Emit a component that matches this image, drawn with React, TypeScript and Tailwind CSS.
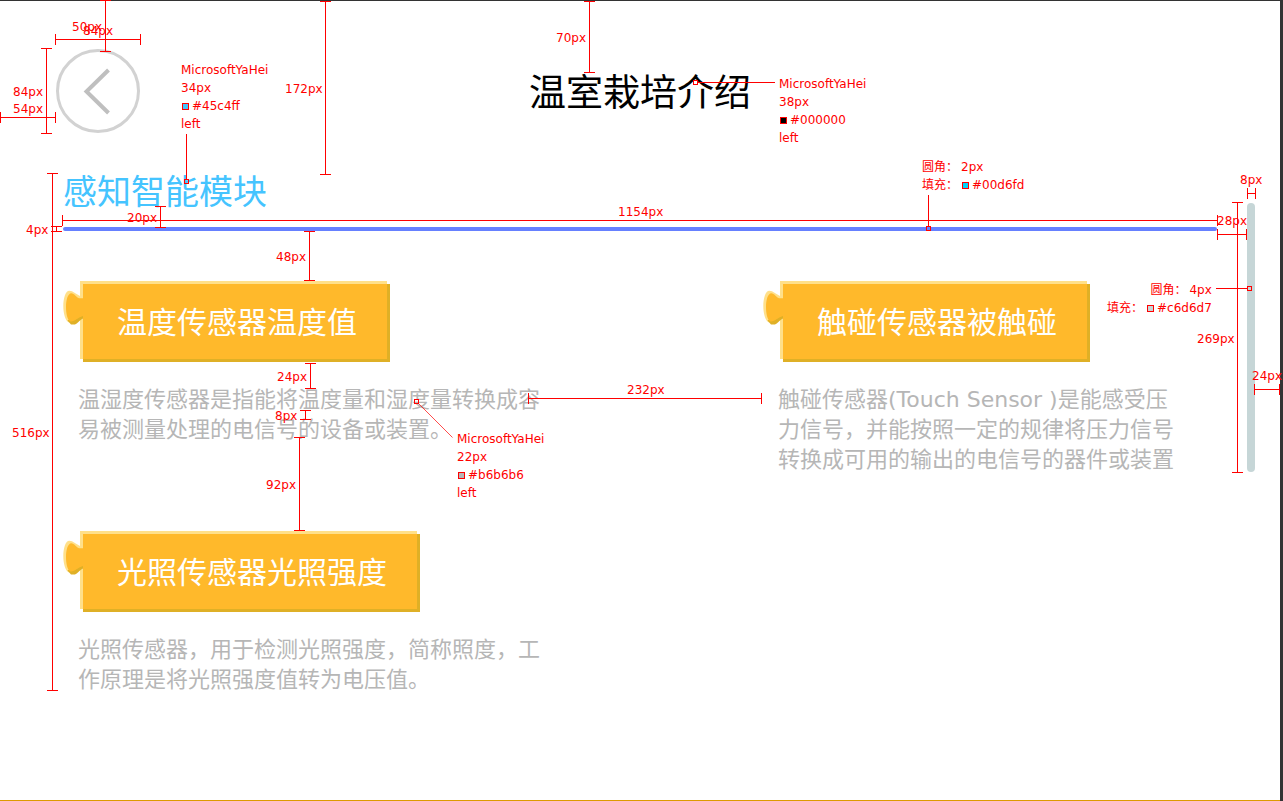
import React from "react";

type Mark = { x1: number; y1: number; x2: number; y2: number };

const dimensions: Mark[] = [
  { x1: 105, y1: 0, x2: 105, y2: 51 },
  { x1: 55, y1: 39, x2: 140, y2: 39 },
  { x1: 46, y1: 48, x2: 46, y2: 133 },
  { x1: 0, y1: 117, x2: 55, y2: 117 },
  { x1: 325, y1: 1, x2: 325, y2: 174 },
  { x1: 589, y1: 1, x2: 589, y2: 72 },
  { x1: 52, y1: 173, x2: 52, y2: 690 },
  { x1: 160, y1: 206, x2: 160, y2: 227 },
  { x1: 62, y1: 220, x2: 1217, y2: 220 },
  { x1: 56, y1: 226, x2: 56, y2: 231 },
  { x1: 309, y1: 231, x2: 309, y2: 280 },
  { x1: 310, y1: 363, x2: 310, y2: 388 },
  { x1: 305, y1: 410, x2: 305, y2: 419 },
  { x1: 299, y1: 437, x2: 299, y2: 530 },
  { x1: 528, y1: 398, x2: 761, y2: 398 },
  { x1: 1217, y1: 234, x2: 1246, y2: 234 },
  { x1: 1247, y1: 193, x2: 1255, y2: 193 },
  { x1: 1237, y1: 202, x2: 1237, y2: 472 },
  { x1: 1254, y1: 389, x2: 1279, y2: 389 },
];

const leaders: Mark[] = [
  { x1: 186, y1: 134, x2: 186, y2: 179 },
  { x1: 698, y1: 82, x2: 774, y2: 82 },
  { x1: 928, y1: 195, x2: 928, y2: 226 },
  { x1: 1216, y1: 288, x2: 1247, y2: 288 },
];

const anchors = [
  { x: 186, y: 181 },
  { x: 695, y: 82 },
  { x: 928, y: 228 },
  { x: 1249, y: 288 },
  { x: 416, y: 401 },
];

function markPath({ x1, y1, x2, y2 }: Mark) {
  return x1 === x2
    ? `M${x1 + 0.5} ${y1}V${y2 + 1}M${x1 - 5} ${y1 + 0.5}h11M${x1 - 5} ${y2 + 0.5}h11`
    : `M${x1} ${y1 + 0.5}H${x2 + 1}M${x1 + 0.5} ${y1 - 5}v11M${x2 + 0.5} ${y1 - 5}v11`;
}

function MarkLines() {
  return (
    <svg
      className="absolute left-0 top-0"
      width="1283"
      height="801"
      fill="none"
      stroke="#ff0000"
      aria-hidden="true"
    >
      {dimensions.map((d, i) => (
        <path key={i} d={markPath(d)} />
      ))}
      {leaders.map((l, i) => (
        <path
          key={i}
          d={
            l.x1 === l.x2
              ? `M${l.x1 + 0.5} ${l.y1}V${l.y2 + 1}`
              : `M${l.x1} ${l.y1 + 0.5}H${l.x2 + 1}`
          }
        />
      ))}
      <path d="M418.5 403.5L452.5 437.5" strokeWidth="0.7" />
      {anchors.map((a, i) => (
        <rect key={i} x={a.x - 1.5} y={a.y - 1.5} width="4" height="4" />
      ))}
    </svg>
  );
}

function Label({ at, children }: { at: string; children: React.ReactNode }) {
  return <div className={`absolute whitespace-nowrap ${at}`}>{children}</div>;
}

function Swatch({ color, value }: { color: string; value: string }) {
  return (
    <span className="inline-flex items-center gap-[3px]">
      <span className={`size-[7px] border border-[#ff0000] ${color}`} />
      {value}
    </span>
  );
}

function FontNote({
  at,
  size,
  color,
  value,
}: {
  at: string;
  size: string;
  color: string;
  value: string;
}) {
  return (
    <Label at={at}>
      <p>MicrosoftYaHei</p>
      <p>{size}</p>
      <p className="flex pl-px">
        <Swatch color={color} value={value} />
      </p>
      <p>left</p>
    </Label>
  );
}

function FillNote({
  at,
  align,
  radius,
  color,
  value,
}: {
  at: string;
  align: string;
  radius: string;
  color: string;
  value: string;
}) {
  return (
    <Label at={at}>
      <p className={`flex gap-[3px] ${align}`}>
        <span>圆角：</span>
        <span>{radius}</span>
      </p>
      <p className="flex gap-1">
        <span>填充：</span>
        <Swatch color={color} value={value} />
      </p>
    </Label>
  );
}

function Annotations() {
  return (
    <div className="pointer-events-none absolute -right-[3px] -top-px bottom-0 left-0 overflow-hidden font-['DejaVu_Sans','Noto_Sans_CJK_SC',sans-serif] text-[12px] leading-[18px] text-[#ff0000]">
      <MarkLines />
      <Label at="left-[72px] top-[18px]">50px</Label>
      <Label at="left-[83px] top-[22px]">84px</Label>
      <Label at="left-[13px] top-[83px]">84px</Label>
      <Label at="left-[13px] top-[100px]">54px</Label>
      <Label at="left-[285px] top-[80px]">172px</Label>
      <Label at="left-[556px] top-[29px]">70px</Label>
      <Label at="left-[127px] top-[209px]">20px</Label>
      <Label at="left-[618px] top-[203px]">1154px</Label>
      <Label at="left-[26px] top-[221px]">4px</Label>
      <Label at="left-[1240px] top-[171px]">8px</Label>
      <Label at="left-[1217px] top-[212px]">28px</Label>
      <Label at="left-[276px] top-[248px]">48px</Label>
      <Label at="left-[277px] top-[368px]">24px</Label>
      <Label at="left-[275px] top-[407px]">8px</Label>
      <Label at="left-[266px] top-[476px]">92px</Label>
      <Label at="left-[12px] top-[424px]">516px</Label>
      <Label at="left-[627px] top-[381px]">232px</Label>
      <Label at="left-[1197px] top-[330px]">269px</Label>
      <Label at="left-[1252px] top-[367px]">24px</Label>
      <FontNote at="left-[181px] top-[61px]" size="34px" color="bg-[#45c4ff]" value="#45c4ff" />
      <FontNote at="left-[779px] top-[75px]" size="38px" color="bg-black" value="#000000" />
      <FontNote at="left-[457px] top-[430px]" size="22px" color="bg-[#b6b6b6]" value="#b6b6b6" />
      <FillNote
        at="left-[922px] top-[158px]"
        align="justify-start"
        radius="2px"
        color="bg-[#00d6fd]"
        value="#00d6fd"
      />
      <FillNote
        at="left-[1107px] top-[281px]"
        align="justify-end"
        radius="4px"
        color="bg-[#c6d6d7]"
        value="#c6d6d7"
      />
    </div>
  );
}

function PuzzleBlock({ title }: { title: string }) {
  return (
    <div className="relative ml-[17px] w-fit border-l-[3px] border-t-[3px] border-[#ffe08a] bg-[#ffb92b] pl-[34px] pr-[30px] shadow-[3px_3px_0_#dfb026]">
      <svg
        className="absolute -left-5 top-[6px]"
        width="21"
        height="36"
        viewBox="0 0 21 36"
        aria-hidden="true"
      >
        <path
          d="M20 6L17 6L11.500 2.800C9.800 1.500 8.300 .7 6.300 .7C2.500 .7 .3 8.500 .3 16C.3 24 2.500 31 6 32.500L20 27Z"
          fill="#ffe08a"
        />
        <path
          d="M4.500 30.500L8 34.500H12C14.500 33.500 16 30.500 20 28.500V22Z"
          fill="#dfb026"
        />
        <path
          d="M21 8.300H16C13.500 7.500 11 3.300 8.300 3.300C5 3.500 3 9.500 3 17C3 24 4.800 31.500 8 31.500C12 31.500 14.500 27.500 20 26H21Z"
          fill="#ffb92b"
        />
      </svg>
      <h3 className="whitespace-nowrap pb-[3px] text-[30px] leading-[72px] text-white">{title}</h3>
    </div>
  );
}

function SensorCard({ title, lines }: { title: string; lines: string[] }) {
  return (
    <article className="min-w-0">
      <PuzzleBlock title={title} />
      <p className="mt-[26px] whitespace-nowrap pl-[15px] font-['DejaVu_Sans','Noto_Sans_CJK_SC',sans-serif] text-[22px] leading-[30px] text-[#b6b6b6]">
        {lines.map((line) => (
          <span key={line} className="block">
            {line}
          </span>
        ))}
      </p>
    </article>
  );
}

const sensors = [
  {
    title: "温度传感器温度值",
    lines: ["温湿度传感器是指能将温度量和湿度量转换成容", "易被测量处理的电信号的设备或装置。"],
  },
  {
    title: "触碰传感器被触碰",
    lines: [
      "触碰传感器(Touch Sensor )是能感受压",
      "力信号，并能按照一定的规律将压力信号",
      "转换成可用的输出的电信号的器件或装置",
    ],
  },
  {
    title: "光照传感器光照强度",
    lines: ["光照传感器，用于检测光照强度，简称照度，工", "作原理是将光照强度值转为电压值。"],
  },
];

export default function App() {
  return (
    <div className="relative flex min-h-screen flex-col border-r-[3px] border-t border-[#333333] bg-white font-['Noto_Sans_CJK_SC',sans-serif]">
      <div className="flex-1 border-b border-[#dd9a00]">
        <header className="grid grid-cols-[84px_1fr_84px] items-center px-14 pt-12">
          <button
            type="button"
            aria-label="返回"
            className="flex size-[84px] items-center justify-center rounded-full border-[3px] border-[#d2d2d2]"
          >
            <svg width="78" height="78" viewBox="0 0 78 78" fill="none" aria-hidden="true">
              <path d="M49.500 18L27.500 39.500L49.500 61" stroke="#bfbfbf" strokeWidth="4" />
            </svg>
          </button>
          <h1 className="pb-0.5 text-center text-[37px] leading-[48px] text-black">温室栽培介绍</h1>
        </header>
        <main className="mt-[37px] flex items-start gap-[30px] pl-[63px] pr-[25px]">
          <section className="min-w-0 flex-1">
            <h2 className="text-[34px] leading-[40px] text-[#45c4ff]">感知智能模块</h2>
            <div className="mt-[17px] h-1 rounded-[2px] bg-[#6680ff]" />
            <div className="mt-[50px] grid grid-cols-[468fr_454fr] gap-x-[232px] gap-y-14">
              {sensors.map((sensor) => (
                <SensorCard key={sensor.title} title={sensor.title} lines={sensor.lines} />
              ))}
            </div>
          </section>
          <div className="mt-[33px] h-[269px] w-2 rounded-[4px] bg-[#c6d6d7]" />
        </main>
      </div>
      <Annotations />
    </div>
  );
}
